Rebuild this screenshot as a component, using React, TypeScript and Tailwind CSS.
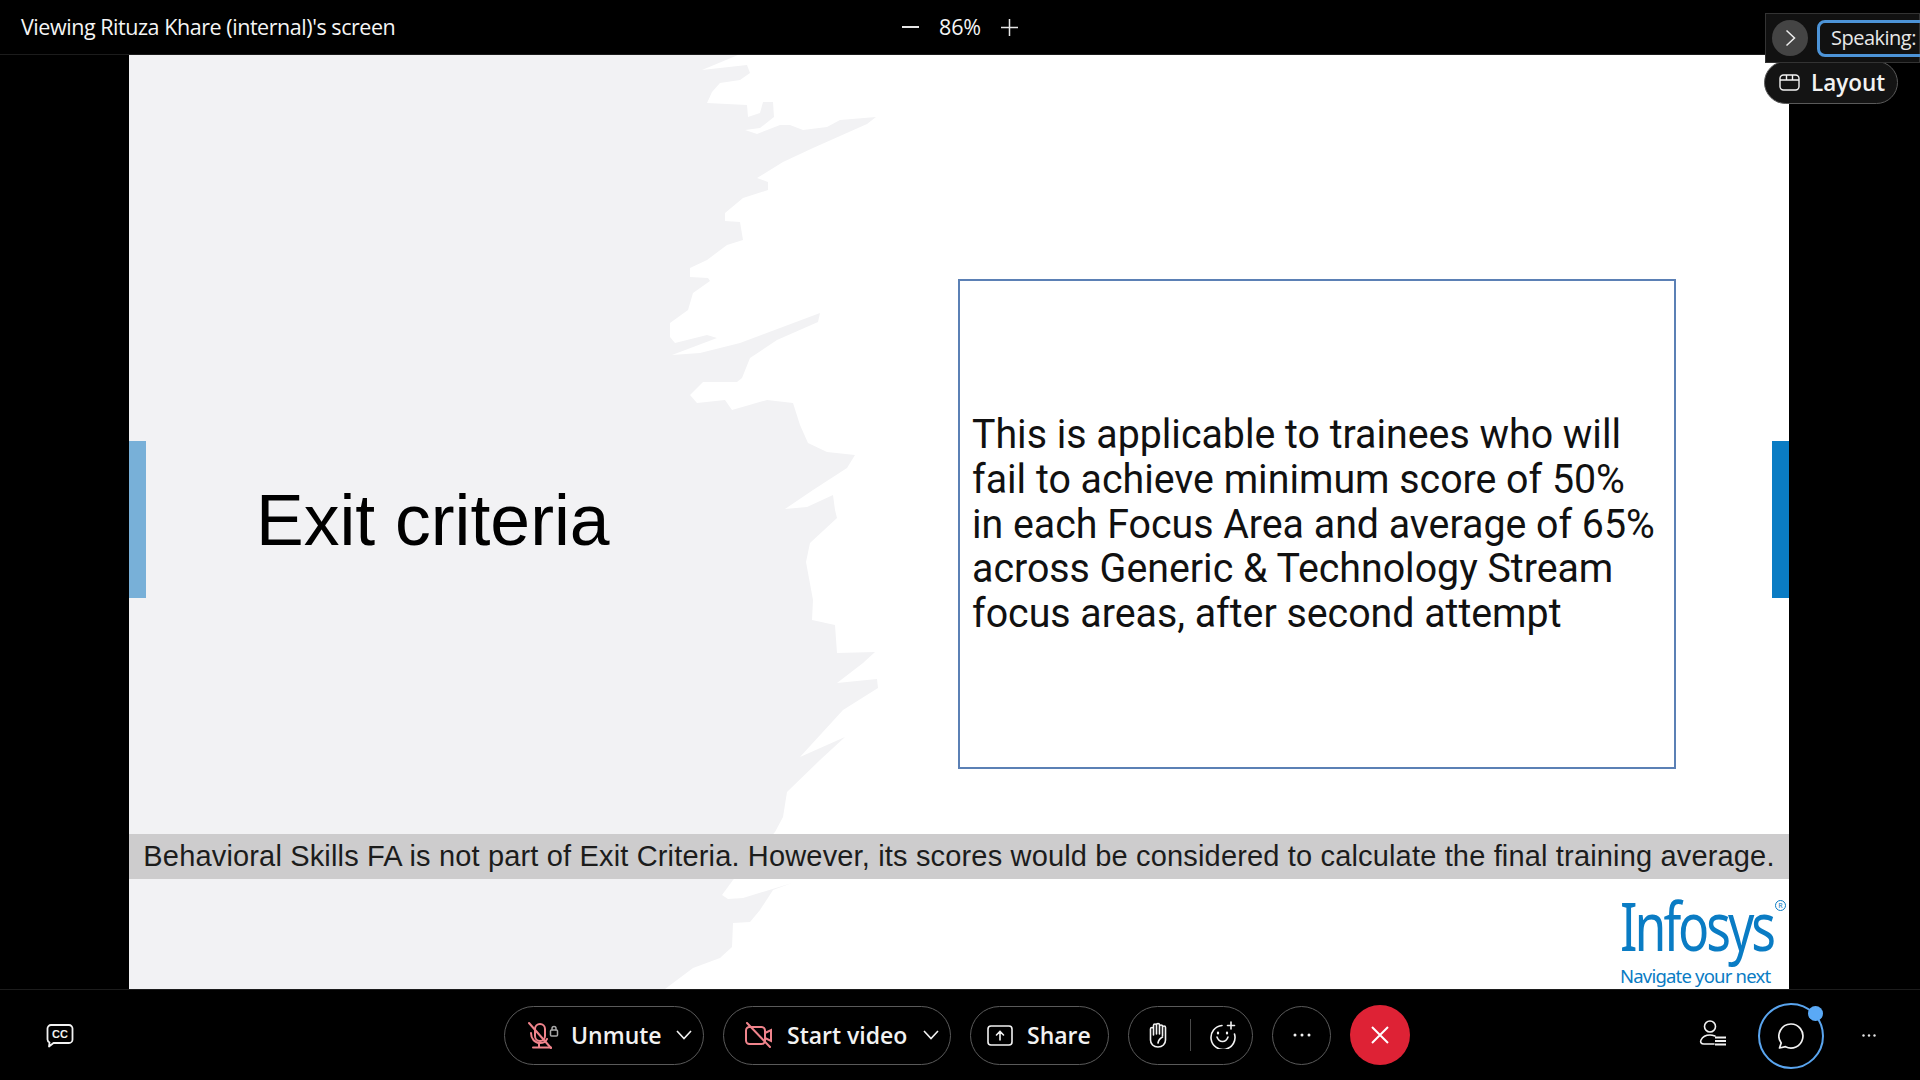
const BRUSH =
  "129,55 738,55 702,70 747,65 750,73 740,80 720,83 712,92 707,103 747,105 748,117 760,113 763,102 773,102 774,117 760,128 745,130 757,134 780,125 790,125 803,130 827,127 840,120 876,117 867,124 813,148 783,162 757,178 768,182 768,190 743,198 725,213 725,221 740,222 743,240 727,245 707,260 690,268 690,277 708,278 710,281 693,293 688,310 670,323 670,337 675,343 707,335 717,338 672,355 700,353 740,343 820,313 818,322 777,340 750,358 742,378 737,382 703,382 690,395 697,403 725,400 732,410 767,400 793,403 800,425 808,443 827,452 855,455 847,468 813,490 785,509 807,507 833,495 835,510 837,518 810,543 806,562 813,600 812,620 835,625 837,653 875,652 863,663 837,683 877,679 878,688 843,710 800,757 845,737 820,760 787,792 783,817 775,832 733,880 722,895 728,899 743,898 792,883 773,890 760,910 750,922 733,923 732,947 720,958 693,968 665,989 129,989";

const uiFont = "font-['Open_Sans','Noto_Sans',sans-serif]";

const Chevron = () => (
  <svg width="18" height="12" viewBox="0 0 18 12" fill="none" stroke="#f2f2f2" strokeWidth="1.6">
    <path d="M2 2l7 7.500L16 2" />
  </svg>
);

const MicMuted = () => (
  <svg width="32" height="28" viewBox="0 0 32 28" fill="none" stroke="#f0848c" strokeWidth="2" strokeLinecap="round">
    <rect x="7" y="3" width="10" height="17" rx="5" />
    <path d="M3 12c0 6 4 10 9 10s6-2 7-4" />
    <path d="M11 22v4M5 26.500h18" />
    <path d="M1 2l22 25" />
    <rect x="22.500" y="9" width="7" height="6" rx="1" stroke="#a8a8a8" strokeWidth="1.500" />
    <path d="M24 9V7.500a2 2 0 014 0V9" stroke="#a8a8a8" strokeWidth="1.500" />
  </svg>
);

const VideoMuted = () => (
  <svg width="27" height="26" viewBox="0 0 27 26" fill="none" stroke="#f0848c" strokeWidth="2" strokeLinecap="round">
    <rect x="1" y="5" width="19" height="17" rx="3.500" />
    <path d="M20 11l6-3v11l-6-3" />
    <path d="M2 1l23 24" />
  </svg>
);

const ShareIcon = () => (
  <svg width="26" height="21" viewBox="0 0 26 21" fill="none" stroke="#f2f2f2" strokeWidth="1.600" strokeLinecap="round">
    <rect x="1" y="1" width="24" height="19" rx="3" />
    <path d="M13 15V6.500M9.500 10l3.500-3.500 3.500 3.500" />
  </svg>
);

const HandIcon = () => (
  <svg width="18" height="26" viewBox="0 0 18 26" fill="none" stroke="#f2f2f2" strokeWidth="1.600" strokeLinecap="round" strokeLinejoin="round">
    <path d="M1.500 7v11c0 4 3 7 7.500 7s7.500-3 7.500-7V5.500a1.500 1.500 0 00-3 0M1.500 7a1.500 1.500 0 013 0v6M4.500 13V3.500a1.500 1.500 0 013 0V12M7.500 3a1.500 1.500 0 013 0v9M10.500 4.500a1.500 1.500 0 013 0V14" />
    <path d="M13.500 15c-2 1-4 3-4.500 6" />
  </svg>
);

const SmilePlus = () => (
  <svg width="28" height="28" viewBox="0 0 28 28" fill="none" stroke="#f2f2f2" strokeWidth="1.600" strokeLinecap="round">
    <path d="M25.500 12A12 12 0 1113 3.500" transform="translate(0 1)" />
    <path d="M8 16c1 3 3 4.500 5.500 4.500S18 19 19 16" />
    <path d="M9 11.500v1M18 11.500v1" strokeWidth="2.200" />
    <path d="M22 1v7M18.500 4.500h7" />
  </svg>
);

const Pill = ({ className, children }: { className: string; children: React.ReactNode }) => (
  <div className={`flex h-[59px] items-center rounded-full border border-[#5a5a5a] text-[23px] font-semibold text-[#f2f2f2] ${className}`}>
    {children}
  </div>
);

export default function App() {
  return (
    <div className={`relative flex h-[1080px] w-[1920px] flex-col overflow-hidden bg-black ${uiFont}`}>
      {/* top bar */}
      <div className="grid h-[55px] grid-cols-3 items-center border-b border-[#1c1c1c] text-[#f5f5f5]">
        <span className="pl-[21px] text-[21.500px] tracking-[-0.45px] whitespace-nowrap">Viewing Rituza Khare (internal)'s screen</span>
        <div className="flex items-center justify-center gap-[20px] text-[21.500px] tracking-[-0.2px]">
          <svg width="17" height="2" viewBox="0 0 17 2"><rect width="17" height="2" fill="#e6e6e6" /></svg>
          <span>86%</span>
          <svg width="17" height="17" viewBox="0 0 17 17" fill="none" stroke="#e6e6e6" strokeWidth="1.500"><path d="M8.500 0v17M0 8.500h17" /></svg>
        </div>
      </div>

      {/* shared screen */}
      <div className="flex h-[934px]">
        <div className="relative ml-[129px] flex w-[1660px] flex-col bg-white font-['Liberation_Sans',Arial,sans-serif]">
          <svg className="absolute inset-0 h-full w-full" viewBox="129 55 1660 934">
            <polygon points={BRUSH} fill="#f2f2f4" />
          </svg>
          <div className="absolute left-0 top-[386px] h-[157px] w-[17px] bg-[#78b0d8]" />
          <div className="absolute right-0 top-[386px] h-[157px] w-[17px] bg-[#0a7cc4]" />

          <div className="relative flex h-[779px]">
            <div className="flex w-[829px] items-center pl-[127px] pt-[152px]">
              <h1 className="text-[71.500px] leading-none text-black">Exit criteria</h1>
            </div>
            <div className="mt-[224px] flex h-[490px] w-[718px] items-center border-2 border-[#5b80b5] bg-white pl-[12px]">
              <p className="origin-left scale-x-[0.947] whitespace-nowrap font-['Roboto',sans-serif] text-[41.500px] leading-[44.700px] text-[#111]">
                This is applicable to trainees who will
                <br />
                fail to achieve minimum score of 50%
                <br />
                in each Focus Area and average of 65%
                <br />
                across Generic &amp; Technology Stream
                <br />
                focus areas, after second attempt
              </p>
            </div>
          </div>

          <div className="relative flex h-[45px] items-center justify-center whitespace-nowrap bg-[#cdcccd] text-[29px] tracking-[0.16px] text-[#1c1c1c]">
            Behavioral Skills FA is not part of Exit Criteria. However, its scores would be considered to calculate the final training average.
          </div>

          <div className="relative flex flex-1 justify-end pr-[15px]">
            <div className="relative flex w-[154px] flex-col font-['Noto_Sans',sans-serif] text-[#0a7cc4]">
              <span className="mt-[13px] origin-left scale-x-[0.76] whitespace-nowrap text-[68px] leading-[66px] tracking-[-4px]">Infosys</span>
              <span className="mt-[7px] whitespace-nowrap text-[18.500px] leading-[22px] tracking-[-0.800px]">Navigate your next</span>
              <span className="absolute -right-[12px] top-[21px] flex h-[11px] w-[11px] items-center justify-center rounded-full border border-[#0a7cc4] text-[7px] leading-none">R</span>
            </div>
          </div>
        </div>
      </div>

      {/* bottom controls */}
      <div className="relative flex h-[91px] items-center justify-center gap-[19px] border-t border-[#1c1c1c] pr-[6px]">
        <div className="absolute left-[46px] top-[34px]">
          <svg width="28" height="24" viewBox="0 0 28 24" fill="none" stroke="#f2f2f2" strokeWidth="1.800" strokeLinejoin="round">
            <path d="M5 1h18a3.500 3.500 0 013.500 3.500v11A3.500 3.500 0 0123 19H7.500L3 22.500l.5-4A3.500 3.500 0 011.500 15.500v-11A3.500 3.500 0 015 1z" />
            <text x="14" y="14" textAnchor="middle" fontSize="11" fontWeight="700" fill="#f2f2f2" stroke="none" fontFamily="Liberation Sans">CC</text>
          </svg>
        </div>

        <Pill className="w-[200px] pl-[23px]">
          <MicMuted />
          <span className="ml-[11px] w-[104px]">Unmute</span>
          <Chevron />
        </Pill>
        <Pill className="w-[228px] pl-[21px]">
          <VideoMuted />
          <span className="ml-[15px] w-[135px]">Start video</span>
          <Chevron />
        </Pill>
        <Pill className="w-[139px] pl-[16px]">
          <ShareIcon />
          <span className="ml-[14px]">Share</span>
        </Pill>
        <Pill className="w-[125px] pl-[20px]">
          <HandIcon />
          <div className="ml-[23px] h-[32px] w-px bg-[#4a4a4a]" />
          <div className="ml-[18px]"><SmilePlus /></div>
        </Pill>
        <Pill className="w-[59px] justify-center">
          <svg width="18" height="4" viewBox="0 0 18 4" fill="#f2f2f2">
            <circle cx="2" cy="2" r="1.500" /><circle cx="9" cy="2" r="1.500" /><circle cx="16" cy="2" r="1.500" />
          </svg>
        </Pill>
        <div className="flex h-[60px] w-[60px] items-center justify-center rounded-full bg-[#de2235]">
          <svg width="20" height="20" viewBox="0 0 20 20" stroke="#fff" strokeWidth="2"><path d="M2 2l16 16M18 2L2 18" /></svg>
        </div>

        <div className="absolute left-[1699px] top-[29px]">
          <svg width="28" height="28" viewBox="0 0 28 28" fill="none" stroke="#f2f2f2" strokeWidth="1.600" strokeLinecap="round">
            <circle cx="11" cy="7.500" r="5.500" />
            <path d="M15 25H5c-3 0-4-2-3-4 1.500-3 5-5 9-5 2 0 3.500.500 5 1" />
            <path d="M16 18.500h11M16 22h11M16 25.500h11" strokeWidth="2" strokeLinecap="butt" />
          </svg>
        </div>
        <div className="absolute left-[1758px] top-[13px] flex h-[66px] w-[66px] items-center justify-center rounded-full border-2 border-[#5aa5ef]">
          <svg width="26" height="26" viewBox="0 0 26 26" fill="none" stroke="#f2f2f2" strokeWidth="1.700" strokeLinejoin="round">
            <path d="M13 1a12 12 0 11-5.500 22.700L1.500 25l1.700-5A12 12 0 0113 1z" />
          </svg>
          <span className="absolute -right-[1px] top-[1px] h-[15px] w-[15px] rounded-full bg-[#5aa9f6]" />
        </div>
        <svg className="absolute left-[1862px] top-[44px]" width="14" height="3" viewBox="0 0 14 3" fill="#e6e6e6">
          <circle cx="1.500" cy="1.500" r="1.200" /><circle cx="7" cy="1.500" r="1.200" /><circle cx="12.500" cy="1.500" r="1.200" />
        </svg>
      </div>

      {/* speaking / layout overlay */}
      <div className="absolute left-[1764px] top-[61px] flex h-[43px] w-[134px] items-center rounded-full border border-[#5a5a5a] bg-[#141414] pl-[14px] text-[22.500px] font-semibold text-[#f2f2f2]">
        <svg width="21" height="17" viewBox="0 0 21 17" fill="none" stroke="#f2f2f2" strokeWidth="1.400">
          <rect x="1" y="1" width="19" height="15" rx="3.500" />
          <path d="M1 6h19M7.500 1v5M13.500 1v5" />
        </svg>
        <span className="ml-[11px]">Layout</span>
      </div>
      <div className="absolute left-[1765px] top-[13px] flex h-[50px] w-[155px] items-center border border-[#333] bg-[#111] pl-[6px]">
        <div className="flex h-[36px] w-[36px] shrink-0 items-center justify-center rounded-full bg-[#444]">
          <svg width="11" height="18" viewBox="0 0 11 18" fill="none" stroke="#eee" strokeWidth="1.500"><path d="M1.500 1.500L9.500 9l-8 7.500" /></svg>
        </div>
        <div className="ml-[9px] flex h-[37px] w-[120px] shrink-0 items-center rounded-[8px] border-[3px] border-[#4d94d8] pl-[11px] text-[20px] tracking-[-0.5px] whitespace-nowrap text-[#e8e8e8]">
          Speaking:
        </div>
      </div>
    </div>
  );
}
